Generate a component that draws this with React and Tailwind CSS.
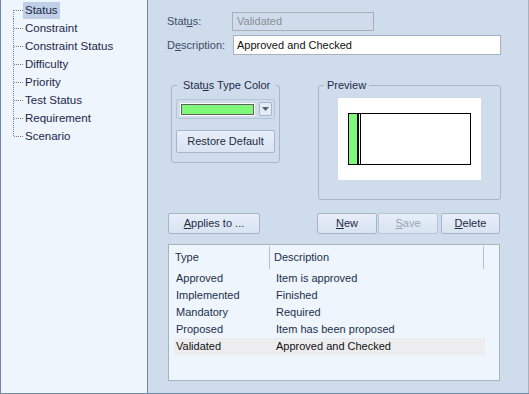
import React from "react";

const treeItems = [
  "Status",
  "Constraint",
  "Constraint Status",
  "Difficulty",
  "Priority",
  "Test Status",
  "Requirement",
  "Scenario",
];

const rows = [
  ["Approved", "Item is approved"],
  ["Implemented", "Finished"],
  ["Mandatory", "Required"],
  ["Proposed", "Item has been proposed"],
  ["Validated", "Approved and Checked"],
];

function Connector({ first, last }) {
  return (
    <svg width="22" height="18" className="shrink-0 block">
      <line
        x1="12.5"
        y1={first ? 9 : 0}
        x2="12.5"
        y2={last ? 10 : 18}
        stroke="#7d7d7d"
        strokeWidth="1"
        strokeDasharray="1 1"
      />
      <line x1="13" y1="9.5" x2="22" y2="9.5" stroke="#7d7d7d" strokeWidth="1" strokeDasharray="1 1" />
    </svg>
  );
}

function Btn({ children, className = "", disabled = false }) {
  return (
    <div
      className={
        "h-[21px] flex items-center justify-center rounded-[2px] border bg-gradient-to-b from-[#e6eef9] to-[#d9e4f2] " +
        (disabled ? "border-[#b9c5d5] text-[#97a3b3] " : "border-[#a8b5c8] text-[#1f2b44] ") +
        className
      }
    >
      {children}
    </div>
  );
}

export default function App() {
  return (
    <div className="w-[529px] h-[394px] flex border-b border-[#7289a3] font-['Liberation_Sans',Arial,sans-serif] overflow-hidden">
      {/* Left tree panel */}
      <div className="w-[148px] shrink-0 h-full bg-[#eef5fd] border-l border-r border-[#6f8aa8] pt-[1px] text-[11.5px] text-[#1b2747]">
        {treeItems.map((t, i) => (
          <div key={t} className="flex h-[18px] items-center">
            <Connector first={i === 0} last={i === treeItems.length - 1} />
            <span
              className={
                "px-[2px] h-[17px] leading-[17px] whitespace-nowrap " +
                (i === 0 ? "bg-[#bfd0e6]" : "")
              }
            >
              {t}
            </span>
          </div>
        ))}
      </div>

      {/* Right pane */}
      <div className="flex-1 h-full bg-[#cfdcec] border-r border-[#a9b1bd] pl-[19px] pr-[27px] pt-[12px] text-[11px]">
        <div className="flex items-center h-[19px]">
          <span className="w-[65px] text-[#3d4b68]">
            Stat<u>u</u>s:
          </span>
          <div className="w-[142px] h-[19px] border border-[#a7afba] bg-[#d0dcec] text-[#8b8f95] flex items-center pl-[4px]">
            Validated
          </div>
        </div>
        <div className="flex items-center h-[20px] mt-[4px]">
          <span className="w-[66px] text-[#3d4b68]">
            D<u>e</u>scription:
          </span>
          <div className="flex-1 h-[20px] border border-[#a9b1bc] bg-white text-[#111] flex items-center pl-[3px]">
            Approved and Checked
          </div>
        </div>

        {/* Groups */}
        <div className="flex items-start mt-[30px]">
          <div className="relative ml-[4px] w-[109px] h-[78px] border border-[#a9b6c9] rounded-[3px] pl-[4px] pt-[13px]">
            <span className="absolute -top-[8px] left-[5px] px-[6px] bg-[#cfdcec] leading-[14px] text-[#1f2b48] whitespace-nowrap">
              Stat<u>u</u>s Type Color
            </span>
            <div className="w-[99px] h-[20px] border border-[#b5c3d7] rounded-[2px] flex items-center pl-[4px]">
              <div className="w-[73px] h-[11px] border border-[#626262] outline outline-white bg-[#7ef97a]" />
              <div className="ml-[5px] w-[13px] h-[14px] border border-[#a9b6c9] rounded-[2px] bg-[#e2ebf6] flex items-center justify-center">
                <svg width="7" height="4">
                  <path d="M0 0 L7 0 L3.5 4 Z" fill="#5a6270" />
                </svg>
              </div>
            </div>
            <Btn className="w-[99px] !h-[23px] mt-[11px]">Restore Default</Btn>
          </div>

          <div className="relative ml-[38px] w-[183px] h-[115px] border border-[#a9b6c9] rounded-[3px] pl-[19px] pt-[12px]">
            <span className="absolute -top-[8px] left-[5px] px-[3px] bg-[#cfdcec] leading-[14px] text-[#1f2b48]">
              Preview
            </span>
            <div className="w-[143px] h-[82px] bg-white pl-[10px] pt-[15px]">
              <div className="w-[123px] h-[52px] border border-black flex">
                <div className="w-[8px] bg-[#7ef97a]" />
                <div className="w-[2px] bg-black" />
                <div className="w-[1px] bg-white" />
                <div className="w-[1px] bg-black" />
              </div>
            </div>
          </div>
        </div>

        {/* Buttons */}
        <div className="flex mt-[13px]">
          <Btn className="ml-[1px] w-[92px]">
            <span>
              <u>A</u>pplies to ...
            </span>
          </Btn>
          <Btn className="ml-[57px] w-[60px]">
            <span>
              <u>N</u>ew
            </span>
          </Btn>
          <Btn className="ml-[1px] w-[60px]" disabled>
            <span>
              <u>S</u>ave
            </span>
          </Btn>
          <Btn className="ml-[3px] w-[59px]">
            <span>
              <u>D</u>elete
            </span>
          </Btn>
        </div>

        {/* List */}
        <div className="mt-[10px] ml-[1px] w-[332px] h-[137px] border border-[#a9b2bf] bg-[#eef5fd] text-[#22304a]">
          <div className="flex h-[25px] items-center">
            <div className="w-[100px] pl-[6px]">Type</div>
            <div className="w-px h-[23px] bg-[#b3bfcf]" />
            <div className="w-[213px] pl-[4px]">Description</div>
            <div className="w-px h-[23px] bg-[#b3bfcf]" />
          </div>
          <div className="ml-[5px]">
            {rows.map(([a, b], i) => (
              <div
                key={a}
                className={
                  "flex w-[311px] h-[17px] items-center " +
                  (i === rows.length - 1 ? "bg-[#ededf0] text-[#111]" : "")
                }
              >
                <div className="w-[102px] pl-[2px]">{a}</div>
                <div>{b}</div>
              </div>
            ))}
          </div>
        </div>
      </div>
    </div>
  );
}
